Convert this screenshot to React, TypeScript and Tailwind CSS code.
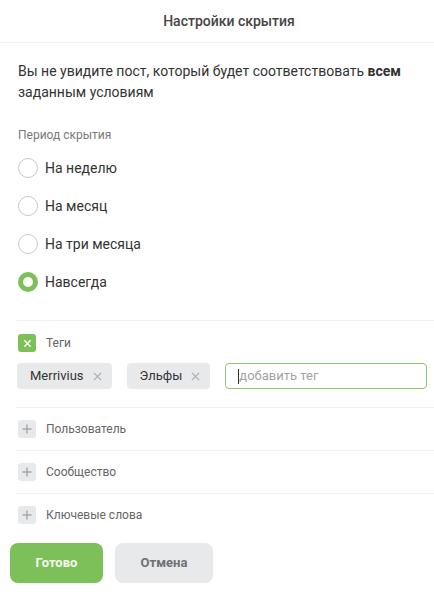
import React from "react";

const GREEN = "bg-[#7dc05a]";

const periods = ["На неделю", "На месяц", "На три месяца", "Навсегда"];
const tags = ["Merrivius", "Эльфы"];
const extraFilters = ["Пользователь", "Сообщество", "Ключевые слова"];

const Radio: React.FC<{ checked?: boolean; label: string }> = ({ checked, label }) => (
  <label className="flex h-[38px] items-center gap-[7px]">
    {checked ? (
      <span className="h-[20px] w-[20px] rounded-full border-[5px] border-[#7dc05a] bg-white" />
    ) : (
      <span className="h-[20px] w-[20px] rounded-full border border-[#c8c8c8] bg-white" />
    )}
    <span className="text-[14px] text-[#333333]">{label}</span>
  </label>
);

const TagChip: React.FC<{ name: string }> = ({ name }) => (
  <div className="flex h-[26px] items-center gap-[9px] rounded-[4px] bg-[#e8e9eb] pl-[13px] pr-[10px]">
    <span className="text-[13px] text-[#333333]">{name}</span>
    <svg width="9" height="9" viewBox="0 0 10 10" className="text-[#a8aaad]">
      <path d="M1 1 L9 9 M9 1 L1 9" stroke="currentColor" strokeWidth="1.3" />
    </svg>
  </div>
);

export default function App() {
  return (
    <div className="h-[596px] w-[434px] bg-white font-['Roboto',sans-serif]">
      {/* Header */}
      <div className="flex h-[43px] items-center justify-center border-b border-[#f1f1f1] pl-[24px]">
        <h2 className="text-[14px] font-medium text-[#454545]">Настройки скрытия</h2>
      </div>

      <div className="pl-[18px]">
        <p className="mt-[18px] pr-[20px] text-[14px] leading-[21px] text-[#333333]">
          Вы не увидите пост, который будет соответствовать <b className="font-bold">всем</b> заданным условиям
        </p>

        <div className="mt-[24px] text-[12px] leading-[16px] text-[#7a7a7a]">Период скрытия</div>
        <div className="mt-[6px] flex flex-col">
          {periods.map((p) => (
            <Radio key={p} label={p} checked={p === "Навсегда"} />
          ))}
        </div>
      </div>

      {/* Tags */}
      <div className="ml-[16px] mt-[19px] border-t border-[#f1f1f1] pb-[18px]">
        <div className="mt-[13px] flex items-center gap-[10px] pl-[2px]">
          <span className={`flex h-[18px] w-[18px] items-center justify-center rounded-[3px] ${GREEN}`}>
            <svg width="9" height="9" viewBox="0 0 10 10">
              <path d="M1.5 1.5 L8.5 8.5 M8.5 1.5 L1.5 8.5" stroke="white" strokeWidth="1.6" />
            </svg>
          </span>
          <span className="text-[12px] text-[#666666]">Теги</span>
        </div>
        <div className="mt-[11px] flex items-center gap-[15px] pl-[1px] pr-[7px]">
          {tags.map((t) => (
            <TagChip key={t} name={t} />
          ))}
          <div className="flex h-[26px] flex-1 items-center rounded-[4px] border border-[#8cc96c] pl-[12px]">
            <span className="h-[15px] w-[1px] bg-[#333333]" />
            <span className="text-[13px] text-[#a3a3a3]">добавить тег</span>
          </div>
        </div>
      </div>

      {/* Other filters */}
      <div className="ml-[16px]">
        {extraFilters.map((f) => (
          <div key={f} className="flex h-[43px] items-center gap-[10px] border-t border-[#f1f1f1] pl-[2px]">
            <span className="flex h-[18px] w-[18px] items-center justify-center rounded-[3px] bg-[#e8e9eb]">
              <svg width="10" height="10" viewBox="0 0 10 10">
                <path d="M5 0.5 V9.5 M0.5 5 H9.5" stroke="#a5a7aa" strokeWidth="1.4" />
              </svg>
            </span>
            <span className="text-[12px] text-[#666666]">{f}</span>
          </div>
        ))}
      </div>

      {/* Actions */}
      <div className="mt-[7px] flex gap-[12px] pl-[10px]">
        <button className={`h-[40px] w-[93px] rounded-[8px] ${GREEN} text-[13px] font-bold text-[#f3faee]`}>
          Готово
        </button>
        <button className="h-[40px] w-[98px] rounded-[8px] bg-[#e8e9eb] text-[13px] font-bold text-[#6d7075]">
          Отмена
        </button>
      </div>
    </div>
  );
}
